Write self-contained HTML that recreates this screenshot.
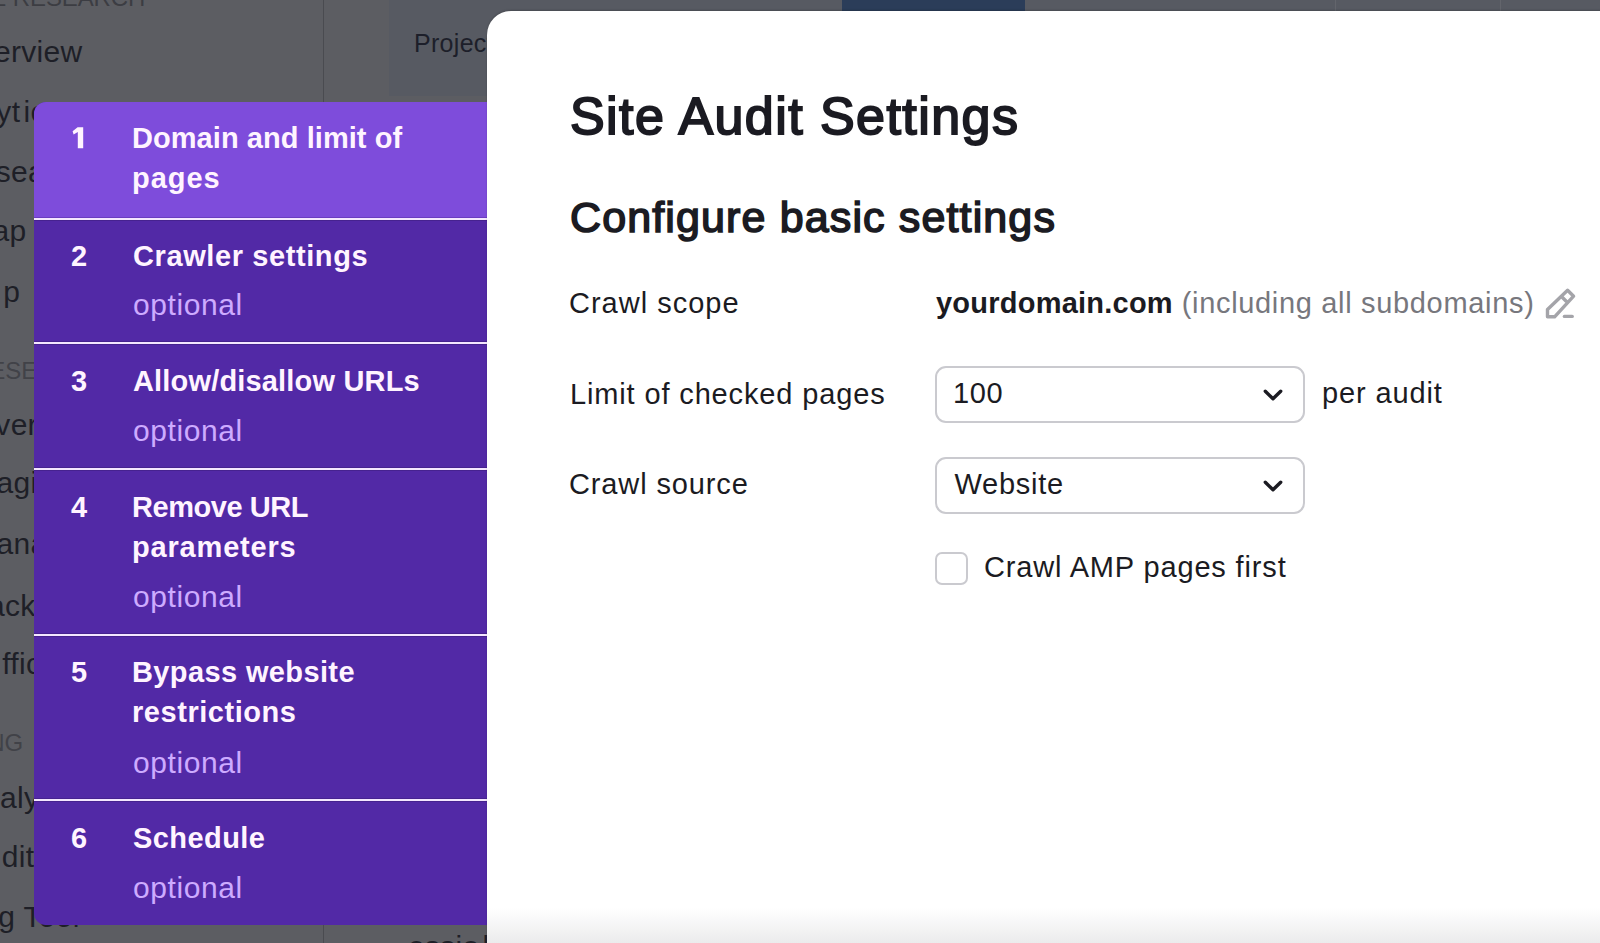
<!DOCTYPE html>
<html><head><meta charset="utf-8"><title>Site Audit Settings</title>
<style>
html,body{margin:0;padding:0;}
body{width:1600px;height:943px;overflow:hidden;position:relative;font-family:"Liberation Sans",sans-serif;background:#5c5d62;}
.box{position:absolute;box-sizing:content-box;}
.t{position:absolute;white-space:nowrap;line-height:1;font-variant-ligatures:none;font-kerning:normal;}
</style></head><body>
<div class="box" style="left:389px;top:0;width:1211px;height:96px;background:#575a62"></div>
<div class="box" style="left:323px;top:0;width:1px;height:943px;background:#4a4b50"></div>
<div class="box" style="left:842px;top:0;width:183px;height:11px;background:#2b3d59"></div>
<div class="box" style="left:1335px;top:0;width:1px;height:11px;background:#63656c"></div>
<div class="box" style="left:1500px;top:0;width:1px;height:11px;background:#63656c"></div>
<div class="t " style="left:414px;top:30.84px;font-size:25px;color:#1d1f2a;letter-spacing:0.3px;">Projects</div>

<div class="t " style="left:-155.4px;top:-14.32px;font-size:24px;color:#3c3d43;letter-spacing:-0.1px;">COMPETITIVE RESEARCH</div>

<div class="t " style="left:-44.9px;top:37.20px;font-size:30px;color:#1e1f27;letter-spacing:0.3px;">Overview</div>

<div class="t " style="left:-64.9px;top:96.91px;font-size:30px;color:#1e1f27;letter-spacing:0.3px;">Analyt</div>

<div class="t " style="left:23.6px;top:96.91px;font-size:30px;color:#1e1f27;letter-spacing:0.3px;">ics</div>

<div class="t " style="left:-43.3px;top:156.60px;font-size:30px;color:#1e1f27;letter-spacing:0.3px;">Research</div>

<div class="t " style="left:-31.1px;top:216.10px;font-size:30px;color:#1e1f27;letter-spacing:0.3px;">Gap</div>

<div class="t " style="left:3.2px;top:276.61px;font-size:30px;color:#1e1f27;letter-spacing:0.3px;">p</div>

<div class="t " style="left:-158.7px;top:358.68px;font-size:24px;color:#414248;letter-spacing:0px;">KEYWORD RESEARCH</div>

<div class="t " style="left:-28.3px;top:409.61px;font-size:30px;color:#1e1f27;letter-spacing:0.3px;">Overview</div>

<div class="t " style="left:-28.7px;top:467.61px;font-size:30px;color:#1e1f27;letter-spacing:0.3px;">Magic</div>

<div class="t " style="left:-28.7px;top:528.61px;font-size:30px;color:#1e1f27;letter-spacing:0.3px;">Manager</div>

<div class="t " style="left:-39.8px;top:590.61px;font-size:30px;color:#1e1f27;letter-spacing:0.3px;">Tracking</div>

<div class="t " style="left:2.2px;top:648.61px;font-size:30px;color:#1e1f27;letter-spacing:0.3px;">ffic</div>

<div class="t " style="left:-150.2px;top:730.68px;font-size:24px;color:#414248;letter-spacing:0px;">LINK BUILDING</div>

<div class="t " style="left:-37.3px;top:783.11px;font-size:30px;color:#1e1f27;letter-spacing:0.3px;">Analytics</div>

<div class="t " style="left:-35.6px;top:841.61px;font-size:30px;color:#1e1f27;letter-spacing:0.3px;">Audit</div>

<div class="t " style="left:-93.8px;top:901.61px;font-size:30px;color:#1e1f27;letter-spacing:0.3px;">Building Tool</div>

<div class="t " style="left:408px;top:932.21px;font-size:30px;color:#1e1f27;letter-spacing:0.3px;">essio</div>

<div class="t " style="left:482.5px;top:932.21px;font-size:30px;color:#1e1f27;letter-spacing:0px;">l</div>

<div class="box" style="left:34px;top:102px;width:470px;height:823px;background:#5229a6;border-radius:12px 0 0 12px;overflow:hidden"><div class="box" style="left:0;top:0;width:470px;height:116px;background:#7e4cdb"></div></div>
<div class="box" style="left:34px;top:217px;width:460px;height:1px;background:#6a3cc0"></div>
<div class="box" style="left:34px;top:220px;width:460px;height:1px;background:#46228f"></div>
<div class="box" style="left:34px;top:218px;width:460px;height:2px;background:#f4e6ff"></div>
<div class="box" style="left:34px;top:341px;width:460px;height:1px;background:#46228f"></div>
<div class="box" style="left:34px;top:344px;width:460px;height:1px;background:#46228f"></div>
<div class="box" style="left:34px;top:342px;width:460px;height:2px;background:#f4e6ff"></div>
<div class="box" style="left:34px;top:467px;width:460px;height:1px;background:#46228f"></div>
<div class="box" style="left:34px;top:470px;width:460px;height:1px;background:#46228f"></div>
<div class="box" style="left:34px;top:468px;width:460px;height:2px;background:#f4e6ff"></div>
<div class="box" style="left:34px;top:633px;width:460px;height:1px;background:#46228f"></div>
<div class="box" style="left:34px;top:636px;width:460px;height:1px;background:#46228f"></div>
<div class="box" style="left:34px;top:634px;width:460px;height:2px;background:#f4e6ff"></div>
<div class="box" style="left:34px;top:798px;width:460px;height:1px;background:#46228f"></div>
<div class="box" style="left:34px;top:801px;width:460px;height:1px;background:#46228f"></div>
<div class="box" style="left:34px;top:799px;width:460px;height:2px;background:#f4e6ff"></div>
<svg class="box" style="left:0;top:0" width="100" height="160" viewBox="0 0 100 160"><path d="M83.2 127.3 L77.6 127.3 L72.6 131.2 L73.6 134.4 L77.8 132.0 L77.8 148.3 L83.2 148.3 Z" fill="#fff4ff"/></svg>
<div class="t " style="left:132px;top:124.45px;font-size:29px;font-weight:700;color:#fff4ff;letter-spacing:0.06px;">Domain and limit of</div>

<div class="t " style="left:132px;top:164.45px;font-size:29px;font-weight:700;color:#fff4ff;letter-spacing:0.94px;">pages</div>

<div class="t " style="left:66px;top:242.45px;font-size:29px;font-weight:700;color:#fff4ff;letter-spacing:0px;width:26px;text-align:center;">2</div>

<div class="t " style="left:133px;top:242.45px;font-size:29px;font-weight:700;color:#fff4ff;letter-spacing:0.6px;">Crawler settings</div>

<div class="t " style="left:133px;top:289.61px;font-size:30px;color:#cdabff;letter-spacing:0.57px;">optional</div>

<div class="t " style="left:66px;top:367.45px;font-size:29px;font-weight:700;color:#fff4ff;letter-spacing:0px;width:26px;text-align:center;">3</div>

<div class="t " style="left:133px;top:367.45px;font-size:29px;font-weight:700;color:#fff4ff;letter-spacing:0.17px;">Allow/disallow URLs</div>

<div class="t " style="left:133px;top:415.61px;font-size:30px;color:#cdabff;letter-spacing:0.57px;">optional</div>

<div class="t " style="left:66px;top:493.45px;font-size:29px;font-weight:700;color:#fff4ff;letter-spacing:0px;width:26px;text-align:center;">4</div>

<div class="t " style="left:132px;top:493.45px;font-size:29px;font-weight:700;color:#fff4ff;letter-spacing:-0.44px;">Remove URL</div>

<div class="t " style="left:132px;top:533.45px;font-size:29px;font-weight:700;color:#fff4ff;letter-spacing:0.82px;">parameters</div>

<div class="t " style="left:133px;top:581.61px;font-size:30px;color:#cdabff;letter-spacing:0.57px;">optional</div>

<div class="t " style="left:66px;top:658.45px;font-size:29px;font-weight:700;color:#fff4ff;letter-spacing:0px;width:26px;text-align:center;">5</div>

<div class="t " style="left:132px;top:658.45px;font-size:29px;font-weight:700;color:#fff4ff;letter-spacing:0.38px;">Bypass website</div>

<div class="t " style="left:132px;top:698.45px;font-size:29px;font-weight:700;color:#fff4ff;letter-spacing:0.55px;">restrictions</div>

<div class="t " style="left:133px;top:747.61px;font-size:30px;color:#cdabff;letter-spacing:0.57px;">optional</div>

<div class="t " style="left:66px;top:824.45px;font-size:29px;font-weight:700;color:#fff4ff;letter-spacing:0px;width:26px;text-align:center;">6</div>

<div class="t " style="left:133px;top:824.45px;font-size:29px;font-weight:700;color:#fff4ff;letter-spacing:0.43px;">Schedule</div>

<div class="t " style="left:133px;top:872.61px;font-size:30px;color:#cdabff;letter-spacing:0.57px;">optional</div>

<div class="box" style="left:487px;top:11px;width:1200px;height:1000px;background:#fff;border-radius:24px 0 0 0;box-shadow:0 -1px 2px rgba(0,0,0,0.18)"></div>
<div class="box" style="left:487px;top:908px;width:1113px;height:35px;background:linear-gradient(#ffffff00,#ebebec)"></div>
<div class="t " style="left:570px;top:90.48px;font-size:52px;color:#1b1b22;letter-spacing:1.44px;-webkit-text-stroke:1.9px #1b1b22;">Site Audit Settings</div>

<div class="t " style="left:570px;top:195.90px;font-size:43px;color:#1b1b22;letter-spacing:1.13px;-webkit-text-stroke:1.6px #1b1b22;">Configure basic settings</div>

<div class="t " style="left:569px;top:289.45px;font-size:29px;color:#1b1b22;letter-spacing:1.0px;">Crawl scope</div>

<div class="t " style="left:570px;top:379.95px;font-size:29px;color:#1b1b22;letter-spacing:0.86px;">Limit of checked pages</div>

<div class="t " style="left:569px;top:470.25px;font-size:29px;color:#1b1b22;letter-spacing:0.87px;">Crawl source</div>

<div class="t " style="left:936px;top:288.95px;font-size:29px;font-weight:700;color:#1b1b22;letter-spacing:0.23px;">yourdomain.com</div>

<div class="t " style="left:1181.75px;top:288.95px;font-size:29px;color:#77777d;letter-spacing:0.67px;">(including all subdomains)</div>

<svg class="box" style="left:1540px;top:284px" width="40" height="40" viewBox="0 0 40 40">
<path d="M7.5 32.8 L7.5 25.5 L27.6 6.2 L33.6 12.2 L14.6 32.8 Z M21.2 12.3 L28.2 19.3" fill="none" stroke="#a4a4a9" stroke-width="3.4" stroke-linejoin="round"/>
<path d="M24.4 32.4 L32.2 32.4" stroke="#a4a4a9" stroke-width="3.4" stroke-linecap="round"/></svg>
<div class="box" style="left:935px;top:366px;width:366px;height:53px;border:2px solid #cacacf;border-radius:11px;background:#fff"></div><div class="t " style="left:953px;top:379.45px;font-size:29px;color:#1b1b22;letter-spacing:0.6px;">100</div>
<svg class="box" style="left:1260px;top:386px" width="26" height="20" viewBox="0 0 26 20"><path d="M5.3 5.2 L13 12.8 L20.7 5.2" fill="none" stroke="#1b1b22" stroke-width="3.4" stroke-linecap="round" stroke-linejoin="round"/></svg>
<div class="box" style="left:935px;top:457px;width:366px;height:53px;border:2px solid #cacacf;border-radius:11px;background:#fff"></div><div class="t " style="left:954.5px;top:469.95px;font-size:29px;color:#1b1b22;letter-spacing:0.75px;">Website</div>
<svg class="box" style="left:1260px;top:477px" width="26" height="20" viewBox="0 0 26 20"><path d="M5.3 5.2 L13 12.8 L20.7 5.2" fill="none" stroke="#1b1b22" stroke-width="3.4" stroke-linecap="round" stroke-linejoin="round"/></svg>
<div class="t " style="left:1322px;top:379.45px;font-size:29px;color:#1b1b22;letter-spacing:0.88px;">per audit</div>

<div class="box" style="left:935px;top:552px;width:29px;height:29px;border:2px solid #cacacf;border-radius:7px;background:#fff"></div>
<div class="t " style="left:984px;top:552.95px;font-size:29px;color:#1b1b22;letter-spacing:0.85px;">Crawl AMP pages first</div>

</body></html>
